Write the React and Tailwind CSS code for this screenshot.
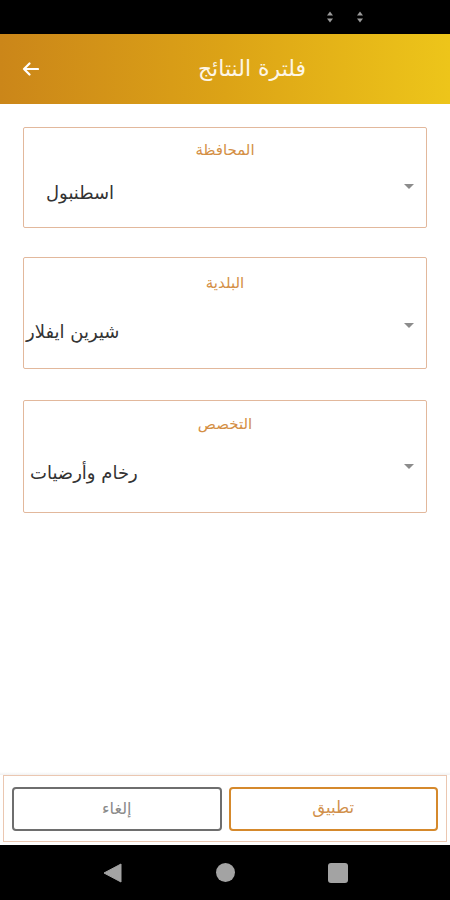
import React from "react";

const fields = [
  { label: "المحافظة", value: "اسطنبول", h: "h-[101px]", lpt: "pt-[12px]", vmt: "mt-[19px]", vpl: "pl-[22px]" },
  { label: "البلدية", value: "شيرين ايفلار", h: "h-[112px]", lpt: "pt-[15px]", vmt: "mt-[25px]", vpl: "pl-[2px]" },
  { label: "التخصص", value: "رخام وأرضيات", h: "h-[113px]", lpt: "pt-[13px]", vmt: "mt-[25px]", vpl: "pl-[6px]" },
];

function UpDown() {
  return (
    <svg width="8" height="12" viewBox="0 0 8 12">
      <path d="M4 0.5 L7 4.5 L1 4.5 Z" fill="#9a9a9a" />
      <path d="M4 11.5 L7 7.5 L1 7.5 Z" fill="#9a9a9a" />
    </svg>
  );
}

export default function App() {
  return (
    <div
      className="w-[450px] h-[900px] flex flex-col bg-white overflow-hidden"
      style={{ fontFamily: '"DejaVu Sans", "Noto Sans", sans-serif' }}
    >
      {/* status bar */}
      <div className="h-[34px] bg-black flex items-center justify-end pr-[86px] gap-[22px] shrink-0">
        <UpDown />
        <UpDown />
      </div>

      {/* header */}
      <div className="h-[70px] shrink-0 flex items-center bg-gradient-to-r from-[#cb8619] via-[#dca316] to-[#edc51a]">
        <div className="w-[54px] flex items-center pl-[22px]">
          <svg width="17" height="14" viewBox="0 0 17 14">
            <path d="M16 7 H2 M7.5 1.5 L2 7 L7.5 12.5" stroke="#ffffff" strokeWidth="2.2" fill="none" strokeLinecap="round" strokeLinejoin="round" />
          </svg>
        </div>
        <div dir="rtl" className="flex-1 text-center text-[#fdf6e8] text-[22px] leading-[28px] font-normal">
          فلترة النتائج
        </div>
      </div>

      {/* fields */}
      <div className="flex flex-col px-[23px] pt-[23px] gap-[29px]">
        {fields.map((f, i) => (
          <div key={i} className={`${f.h} border border-[#e2b89c] rounded-[2px] flex flex-col ${i === 2 ? "mt-[2px]" : ""}`}>
            <div dir="rtl" className={`${f.lpt} text-center text-[15px] leading-[20px] text-[#d48f45]`}>
              {f.label}
            </div>
            <div className={`${f.vmt} flex items-center justify-between pr-[12px] ${f.vpl}`}>
              <span dir="rtl" className="text-[18px] leading-[28px] text-[#333333]">
                {f.value}
              </span>
              <span className="mb-[14px] w-0 h-0 border-l-[5px] border-r-[5px] border-t-[5px] border-l-transparent border-r-transparent border-t-[#8c8c8c]" />
            </div>
          </div>
        ))}
      </div>

      <div className="flex-1" />

      {/* bottom buttons */}
      <div className="shrink-0 h-[3px] bg-gradient-to-b from-white to-[#f1f1f1]" />
      <div className="shrink-0 mx-[3px] h-[67px] border border-[#ebc7b1] flex items-center gap-[7px] px-[8px]">
        <div dir="rtl" className="w-[210px] h-[44px] border-2 border-[#6e6e6e] rounded-[4px] flex items-center justify-center text-[16px] text-[#8a8a8a]">
          إلغاء
        </div>
        <div dir="rtl" className="w-[210px] h-[44px] border-2 border-[#d5892c] rounded-[4px] flex items-center justify-center text-[16.5px] text-[#d1904a]">
          تطبيق
        </div>
      </div>
      <div className="shrink-0 h-[3px] bg-white" />

      {/* nav bar */}
      <div className="shrink-0 h-[55px] bg-black flex items-center">
        <div className="flex items-center h-full">
          <div className="ml-[103px]">
            <svg width="19" height="20" viewBox="0 0 19 20">
              <path d="M18 1 L18 19 L1 10 Z" fill="#a3a3a3" strokeLinejoin="round" stroke="#a3a3a3" strokeWidth="1" />
            </svg>
          </div>
          <div className="ml-[94px] w-[19px] h-[19px] rounded-full bg-[#a3a3a3]" />
          <div className="ml-[93px] w-[20px] h-[20px] rounded-[3px] bg-[#a3a3a3]" />
        </div>
      </div>
    </div>
  );
}
